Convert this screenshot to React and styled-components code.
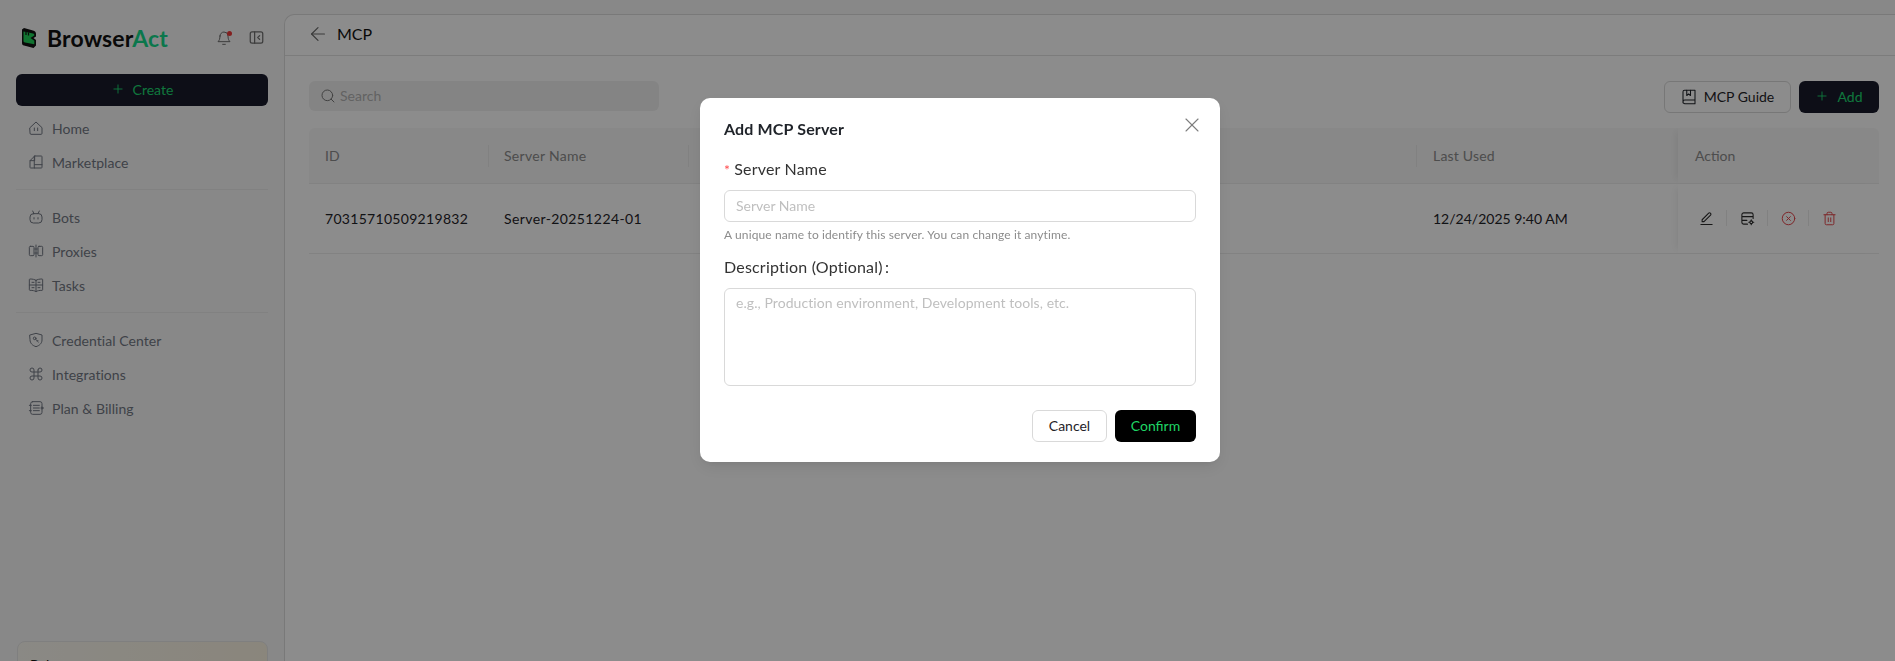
import React from "react";
import styled, { createGlobalStyle } from "styled-components";
import { ArrowLeft, Command, Plus, Search, Trash2, X, CircleX } from "lucide-react";

const GlobalStyle = createGlobalStyle`
  html, body {
    margin: 0;
    height: 100%;
    overflow: hidden;
  }
  * {
    box-sizing: border-box;
  }
  body {
    font-family: "Lato", "Open Sans", sans-serif;
    color: #1f2329;
    background: #f8f8f8;
  }
`;

const Page = styled.div`
  display: flex;
  width: 1895px;
  height: 661px;
  overflow: hidden;
`;

const Sidebar = styled.aside`
  flex: 0 0 284px;
  padding: 14px 16px 0;
  display: flex;
  flex-direction: column;
  & > * {
    flex: none;
  }
`;

const Brand = styled.div`
  display: flex;
  align-items: center;
  height: 47px;
  padding-left: 5px;
`;

const BrandName = styled.span`
  margin-left: 10px;
  font-size: 23px;
  font-weight: 700;
  color: #111;
  letter-spacing: 0.15px;
  b {
    font-weight: 700;
    color: #14d98a;
  }
`;

const BrandIcons = styled.div`
  margin-left: auto;
  display: flex;
  align-items: center;
  gap: 17px;
  padding-right: 4px;
  color: #6f6f6f;
`;

const Bell = styled.span`
  position: relative;
  display: flex;
  &::after {
    content: "";
    position: absolute;
    top: 1px;
    right: 0;
    width: 5px;
    height: 5px;
    border-radius: 50%;
    background: #ef3a3a;
  }
`;

const DarkButton = styled.button`
  display: flex;
  align-items: center;
  justify-content: center;
  gap: 8px;
  border: 0;
  border-radius: 6px;
  background: #181a2b;
  color: #1dd86f;
  font: inherit;
  font-size: 14px;
  height: 32px;
  padding: 0 0 2px;
  width: ${(p) => p.$width};
`;

const CreateRow = styled.div`
  margin-top: 13px;
  margin-bottom: 5px;
`;

const NavItem = styled.div`
  display: flex;
  align-items: center;
  gap: 8px;
  height: 34px;
  padding-left: 12px;
  font-size: 14px;
  letter-spacing: 0.05px;
  color: #737884;
  svg {
    flex: none;
  }
`;

const Divider = styled.div`
  height: 1px;
  margin: 10px 0;
  background: #ececec;
`;

const BalanceCard = styled.div`
  margin-top: 216px;
  width: 251px;
  height: 120px;
  margin-left: 1px;
  padding: 14px 12px;
  border: 1px solid #e8e8e8;
  border-radius: 8px;
  background: linear-gradient(90deg, #fbf9f2, #fbf4e2);
  font-size: 14px;
  color: #111;
`;

const Main = styled.main`
  flex: 1;
  margin-top: 14px;
  min-width: 0;
  border-left: 1px solid #dcdcdc;
  border-top: 1px solid #dcdcdc;
  border-top-left-radius: 10px;
  background: #fff;
`;

const TopBar = styled.header`
  display: flex;
  align-items: center;
  gap: 8px;
  height: 41px;
  padding-left: 22px;
  padding-bottom: 4px;
  border-bottom: 1px solid #e2e2e2;
  font-size: 16px;
  color: #111;
  svg {
    color: #6a6a6a;
    margin-top: 2px;
  }
`;

const Content = styled.div`
  padding: 25px 16px 0 24px;
`;

const Toolbar = styled.div`
  display: flex;
  align-items: flex-start;
  justify-content: space-between;
  height: 32px;
  margin-bottom: 15px;
`;

const SearchBox = styled.div`
  display: flex;
  align-items: center;
  gap: 4px;
  width: 350px;
  height: 30px;
  padding: 0 0 2px 11px;
  border-radius: 6px;
  background: #f1f1f1;
  font-size: 14px;
  color: #b3b3b3;
  svg {
    color: #777;
    margin-top: 2px;
  }
`;

const ToolActions = styled.div`
  display: flex;
  gap: 8px;
`;

const OutlineButton = styled.button`
  display: flex;
  align-items: center;
  justify-content: center;
  gap: 6px;
  width: 127px;
  height: 32px;
  padding: 0 1px 2px 0;
  border: 1px solid #d9d9d9;
  border-radius: 6px;
  background: #fff;
  font: inherit;
  font-size: 14px;
  color: #1f2329;
  svg {
    margin-top: 2px;
  }
`;

const Row = styled.div`
  display: grid;
  grid-template-columns: 179px 200px 1fr 262px 201px;
  height: ${(p) => p.$height}px;
  background: ${(p) => (p.$head ? "#f7f7f7" : "transparent")};
  border-bottom: 1px solid #ededed;
  border-radius: ${(p) => (p.$head ? "6px 6px 0 0" : "0")};
  font-size: 14px;
  color: ${(p) => (p.$head ? "#8c8c8c" : "#1f2329")};
`;

const Cell = styled.div`
  position: relative;
  display: flex;
  align-items: center;
  padding: 0 0 1px 16px;
  letter-spacing: ${(p) => p.$spacing || "0"};
  &::before {
    content: "";
    display: ${(p) => (p.$sep ? "block" : "none")};
    position: absolute;
    left: 0;
    top: 50%;
    width: 1px;
    height: 22px;
    transform: translateY(-50%);
    background: #ececec;
  }
`;

const DateCell = styled(Cell)`
  padding-left: 17px;
`;

const ActionCell = styled(Cell)`
  padding-left: ${(p) => p.$pad}px;
  box-shadow: -6px 0 6px -4px rgba(0, 0, 0, 0.06);
`;

const ActionIcon = styled.span`
  display: flex;
  width: 40px;
  justify-content: center;
  color: ${(p) => (p.$danger ? "#e5484d" : "#2b2b2b")};
`;

const ActionList = styled.div`
  display: flex;
  align-items: center;
`;

const ActionSep = styled.span`
  width: 1px;
  height: 16px;
  background: #ececec;
`;

const Overlay = styled.div`
  position: fixed;
  inset: 0;
  display: flex;
  justify-content: center;
  align-items: flex-start;
  padding-top: 98px;
  background: rgba(0, 0, 0, 0.45);
`;

const Dialog = styled.section`
  position: relative;
  width: 520px;
  height: 364px;
  padding: 19px 24px;
  margin-left: 25px;
  border-radius: 10px;
  background: #fff;
  box-shadow: 0 6px 16px rgba(0, 0, 0, 0.08), 0 3px 6px -4px rgba(0, 0, 0, 0.12);
`;

const DialogTitle = styled.h2`
  margin: 0 0 17px;
  height: 24px;
  line-height: 24px;
  font-size: 16px;
  font-weight: 700;
  letter-spacing: 0.15px;
  color: #1f2329;
`;

const CloseButton = styled.button`
  position: absolute;
  top: 15px;
  right: 16px;
  width: 24px;
  height: 24px;
  display: flex;
  align-items: center;
  justify-content: center;
  padding: 0;
  border: 0;
  background: none;
  color: #7d7d7d;
`;

const FieldLabel = styled.label`
  display: block;
  height: 22px;
  line-height: 22px;
  font-size: 16px;
  letter-spacing: 0.2px;
  color: #333;
  i {
    color: #ff4d4f;
    font-style: normal;
    font-size: 14px;
    margin-right: 4px;
  }
`;

const TextInput = styled.input`
  display: block;
  width: 100%;
  height: 32px;
  margin-top: 10px;
  padding: 0 11px 1px;
  border: 1px solid #d9d9d9;
  border-radius: 6px;
  font: inherit;
  font-size: 14px;
  outline: none;
  &::placeholder {
    color: #bfbfbf;
  }
`;

const HelpText = styled.p`
  margin: 5px 0 13px;
  height: 16px;
  line-height: 16px;
  font-size: 12px;
  letter-spacing: 0.12px;
  color: #8c8c8c;
`;

const TextArea = styled.textarea`
  display: block;
  width: 100%;
  height: 98px;
  margin-top: 10px;
  padding: 3px 11px;
  border: 1px solid #d9d9d9;
  border-radius: 6px;
  font: inherit;
  font-size: 14px;
  line-height: 22px;
  letter-spacing: 0.07px;
  resize: none;
  outline: none;
  &::placeholder {
    color: #bfbfbf;
  }
`;

const DialogFooter = styled.footer`
  display: flex;
  justify-content: flex-end;
  gap: 8px;
  margin-top: 24px;
`;

const CancelButton = styled.button`
  width: 75px;
  height: 32px;
  padding: 0 0 1px;
  border: 1px solid #d9d9d9;
  border-radius: 6px;
  background: #fff;
  font: inherit;
  font-size: 14px;
  color: #1f2329;
`;

const ConfirmButton = styled.button`
  width: 81px;
  height: 32px;
  padding: 0 0 1px;
  border: 0;
  border-radius: 6px;
  background: #000;
  font: inherit;
  font-size: 14px;
  color: #1fd565;
`;

function Icon({ size = 16, sw = 1.5, children }) {
  return (
    <svg
      width={size}
      height={size}
      viewBox="0 0 24 24"
      fill="none"
      stroke="currentColor"
      strokeWidth={sw}
      strokeLinecap="round"
      strokeLinejoin="round"
    >
      {children}
    </svg>
  );
}

const HomeIcon = () => (
  <Icon>
    <path d="M3 11.5 12 3l9 8.5V20a1.5 1.5 0 0 1-1.5 1.5h-15A1.5 1.5 0 0 1 3 20z" />
    <path d="M9.5 12v4M14.5 12v4" />
  </Icon>
);
const MarketIcon = () => (
  <Icon>
    <path d="M10 3h10a1 1 0 0 1 1 1v16a1 1 0 0 1-1 1H10zM10 3v7H3v10a1 1 0 0 0 1 1h6M3 10l7-7M10 16h11" />
  </Icon>
);
const BotIcon = () => (
  <Icon>
    <rect x="3" y="7" width="18" height="14" rx="5" />
    <path d="M7 3l2 4M17 3l-2 4M9 13v2M15 13v2" />
  </Icon>
);
const ProxyIcon = () => (
  <Icon>
    <rect x="2" y="5" width="7" height="14" rx="1.5" />
    <rect x="15" y="5" width="7" height="14" rx="1.5" />
    <path d="M12 3v18M10 9h4M10 15h4" />
  </Icon>
);
const TaskIcon = () => (
  <Icon>
    <path d="M12 5c-2-1.3-5-2-9-2a1 1 0 0 0-1 1v15a1 1 0 0 0 1 1c4 0 7 .5 9 2 2-1.500 5-2 9-2a1 1 0 0 0 1-1V4a1 1 0 0 0-1-1c-4 0-7 .7-9 2zM12 5v17M2 12h20M6 8h3M15 8h3M6 16h3M15 16h3" />
  </Icon>
);
const ShieldIcon = () => (
  <Icon>
    <path d="M3 4.500 12 2l9 2.500V12c0 5-4 8.500-9 10-5-1.500-9-5-9-10z" />
    <circle cx="10" cy="9.500" r="2" />
    <path d="m11.500 11 4 4M14 13.500l1-1" />
  </Icon>
);
const PlanIcon = () => (
  <Icon>
    <rect x="4" y="2.500" width="17" height="19" rx="3" />
    <path d="M8 8h9M8 12h9M8 16h9M2 8h3M2 16h3" />
    <circle cx="21" cy="12" r="1.500" />
  </Icon>
);
const BookIcon = () => (
  <Icon size={18} sw={1.4}>
    <path d="M4 19.500V5a2 2 0 0 1 2-2h14v18H6.500A2.500 2.500 0 0 1 4 18.500a2.500 2.500 0 0 1 2.500-2.500H20" />
    <path d="M9 3v7l2.500-2 2.500 2V3" />
  </Icon>
);
const PenIcon = () => (
  <Icon size={15} sw={1.7}>
    <path d="M5 17v-3L15.500 3.500a1.800 1.800 0 0 1 2.600 0l.4.4a1.800 1.800 0 0 1 0 2.600L8 17z" />
    <path d="M3 21.500h18" />
  </Icon>
);
const ServerCogIcon = () => (
  <Icon size={15} sw={1.7}>
    <path d="M12 21H6a3 3 0 0 1-3-3V6a3 3 0 0 1 3-3h12a3 3 0 0 1 3 3v6M3 9h18M3 15h8" />
    <circle cx="18" cy="18" r="2.200" />
    <path d="M18 14v1.500M18 20.500V22M14 18h1.500M20.500 18H22" />
  </Icon>
);
const PanelIcon = () => (
  <Icon size={15} sw={2}>
    <rect x="2" y="3" width="20" height="18" rx="3" />
    <path d="M9 3v18M17 9l-3 3 3 3" />
  </Icon>
);
const BellIcon = () => (
  <Icon size={16} sw={1.5}>
    <path d="M6 9a6 6 0 0 1 12 0c0 5 1.500 7 3 8.500H3C4.500 16 6 14 6 9zM10 21.500h4" />
  </Icon>
);

function Logo() {
  return (
    <svg width="16" height="22" viewBox="0 0 16 22">
      <path
        d="M1 2.500 3 1l9 2.500c2 .6 3 1.700 3 3.500v2.500L12.500 11 15 13v5.500L12.500 21 3 18.500c-1.300-.4-2-1-2-2.500z"
        fill="#111"
      />
      <path
        d="M2.500 4.500 12 6.500c1 .2 1.300.7 1.300 1.500v.5L9.500 11l3.800 2.800v3.500L4 15.500c-1-.2-1.500-.7-1.500-1.500z"
        fill="#1fd35a"
      />
      <path d="M5 5v3M7.500 5.500v3" stroke="#111" strokeWidth="1.200" />
    </svg>
  );
}

const topNav = [
  ["Home", HomeIcon],
  ["Marketplace", MarketIcon],
];
const midNav = [
  ["Bots", BotIcon],
  ["Proxies", ProxyIcon],
  ["Tasks", TaskIcon],
];
const lowNav = [
  ["Credential Center", ShieldIcon],
  ["Integrations", () => <Command size={16} strokeWidth={1.5} />],
  ["Plan & Billing", PlanIcon],
];

function NavGroup({ items }) {
  return items.map(([label, Glyph]) => (
    <NavItem key={label}>
      <Glyph />
      {label}
    </NavItem>
  ));
}

export default function App() {
  return (
    <>
      <GlobalStyle />
      <Page>
        <Sidebar>
          <Brand>
            <Logo />
            <BrandName>
              Browser<b>Act</b>
            </BrandName>
            <BrandIcons>
              <Bell>
                <BellIcon />
              </Bell>
              <PanelIcon />
            </BrandIcons>
          </Brand>
          <CreateRow>
            <DarkButton $width="252px">
              <Plus size={14} strokeWidth={1.6} /> Create
            </DarkButton>
          </CreateRow>
          <NavGroup items={topNav} />
          <Divider />
          <NavGroup items={midNav} />
          <Divider />
          <NavGroup items={lowNav} />
          <BalanceCard>Balance</BalanceCard>
        </Sidebar>
        <Main>
          <TopBar>
            <ArrowLeft size={22} strokeWidth={1.3} />
            MCP
          </TopBar>
          <Content>
            <Toolbar>
              <SearchBox>
                <Search size={16} strokeWidth={1.5} />
                Search
              </SearchBox>
              <ToolActions>
                <OutlineButton>
                  <BookIcon />
                  MCP Guide
                </OutlineButton>
                <DarkButton $width="80px">
                  <Plus size={14} strokeWidth={1.6} /> Add
                </DarkButton>
              </ToolActions>
            </Toolbar>
            <Row $head $height={56}>
              <Cell>ID</Cell>
              <Cell $sep $spacing="0.3px">Server Name</Cell>
              <Cell $sep />
              <DateCell $sep $spacing="0.2px">Last Used</DateCell>
              <ActionCell $pad={17}>Action</ActionCell>
            </Row>
            <Row $height={70}>
              <Cell $spacing="0.3px">70315710509219832</Cell>
              <Cell $spacing="0.4px">Server-20251224-01</Cell>
              <Cell />
              <DateCell>12/24/2025 9:40 AM</DateCell>
              <ActionCell $pad={8}>
                <ActionList>
                  <ActionIcon>
                    <PenIcon />
                  </ActionIcon>
                  <ActionSep />
                  <ActionIcon>
                    <ServerCogIcon />
                  </ActionIcon>
                  <ActionSep />
                  <ActionIcon $danger>
                    <CircleX size={15} strokeWidth={1.6} />
                  </ActionIcon>
                  <ActionSep />
                  <ActionIcon $danger>
                    <Trash2 size={15} strokeWidth={1.6} />
                  </ActionIcon>
                </ActionList>
              </ActionCell>
            </Row>
          </Content>
        </Main>
      </Page>
      <Overlay>
        <Dialog>
          <DialogTitle>Add MCP Server</DialogTitle>
          <CloseButton>
            <X size={24} strokeWidth={1.1} />
          </CloseButton>
          <FieldLabel>
            <i>*</i>Server Name
          </FieldLabel>
          <TextInput placeholder="Server Name" />
          <HelpText>A unique name to identify this server. You can change it anytime.</HelpText>
          <FieldLabel>Description (Optional)&thinsp;:</FieldLabel>
          <TextArea placeholder="e.g., Production environment, Development tools, etc." />
          <DialogFooter>
            <CancelButton>Cancel</CancelButton>
            <ConfirmButton>Confirm</ConfirmButton>
          </DialogFooter>
        </Dialog>
      </Overlay>
    </>
  );
}
